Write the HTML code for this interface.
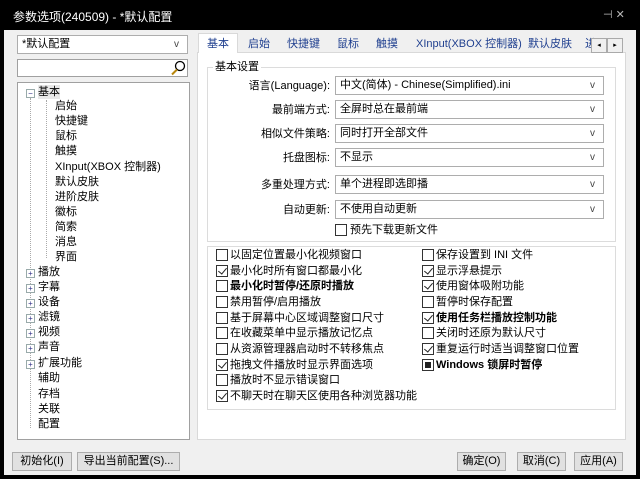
<!DOCTYPE html>
<html><head><meta charset="utf-8"><style>
*{box-sizing:border-box;margin:0;padding:0}
body{width:640px;height:479px;background:#000;font-family:"Liberation Sans","Noto Sans CJK SC",sans-serif;font-size:11px;color:#000;position:relative;overflow:hidden}
.a{position:absolute;white-space:nowrap}
#win{position:absolute;left:4px;top:30px;width:632px;height:445px;background:#f0f0f0}
.box{position:absolute;background:#fff;border:1px solid #a0a0a0}
.cb{position:absolute;background:#fff;border:1px solid #adadad;height:19px;line-height:17px;padding-left:4px}
.cb:after{content:"v";position:absolute;right:8px;top:0;font-size:10px;color:#444}
.btn{position:absolute;border:1px solid #adadad;background:#e1e1e1;height:19px;line-height:17px;text-align:center}
.tab{position:absolute;top:36px;color:#1f3f8f;line-height:16px}
.ck{position:absolute;width:12px;height:12px;border:1px solid #333;background:#fff}
.ck.on:after{content:"";position:absolute;left:3px;top:0px;width:4px;height:7px;border:solid #222;border-width:0 1.5px 1.5px 0;transform:rotate(40deg)}
.lbl{position:absolute;line-height:14px;white-space:nowrap}
.t{position:absolute;line-height:14px;white-space:nowrap}
.pl{position:absolute;width:9px;height:9px;border:1px solid #9aa;background:#fff;font-size:8px;line-height:7px;text-align:center;color:#338}
</style></head><body>
<div class="a" style="left:13px;top:8px;color:#fff;font-size:12px">参数选项(240509) - *默认配置</div>
<div class="a" style="left:603px;top:8px;color:#bbb;font-size:11px">⊣ ✕</div>
<div id="win"></div>
<div class="cb" style="left:17px;top:35px;width:171px">*默认配置</div>
<div class="box" style="left:17px;top:59px;width:171px;height:18px"></div>
<svg class="a" style="left:170px;top:60px" width="17" height="16"><circle cx="10" cy="6" r="4.5" fill="none" stroke="#000" stroke-width="1.3"/><line x1="7" y1="9.5" x2="2" y2="14.5" stroke="#b8860b" stroke-width="2"/></svg>
<div class="box" style="left:17px;top:82px;width:173px;height:358px"></div>
<div class="a" style="left:30px;top:98px;height:330px;border-left:1px dotted #aaa"></div>
<div class="a" style="left:46px;top:100px;height:158px;border-left:1px dotted #aaa"></div>
<div class="pl" style="left:26px;top:89px">−</div>
<div class="t" style="left:38px;top:85px;background:#e8e8e8">基本</div>
<div class="t" style="left:55px;top:99px">启始</div>
<div class="t" style="left:55px;top:114px">快捷键</div>
<div class="t" style="left:55px;top:129px">鼠标</div>
<div class="t" style="left:55px;top:144px">触摸</div>
<div class="t" style="left:55px;top:160px">XInput(XBOX 控制器)</div>
<div class="t" style="left:55px;top:175px">默认皮肤</div>
<div class="t" style="left:55px;top:190px">进阶皮肤</div>
<div class="t" style="left:55px;top:205px">徽标</div>
<div class="t" style="left:55px;top:220px">简索</div>
<div class="t" style="left:55px;top:235px">消息</div>
<div class="t" style="left:55px;top:250px">界面</div>
<div class="pl" style="left:26px;top:269px">+</div><div class="t" style="left:38px;top:265px">播放</div>
<div class="pl" style="left:26px;top:284px">+</div><div class="t" style="left:38px;top:280px">字幕</div>
<div class="pl" style="left:26px;top:299px">+</div><div class="t" style="left:38px;top:295px">设备</div>
<div class="pl" style="left:26px;top:314px">+</div><div class="t" style="left:38px;top:310px">滤镜</div>
<div class="pl" style="left:26px;top:329px">+</div><div class="t" style="left:38px;top:325px">视频</div>
<div class="pl" style="left:26px;top:344px">+</div><div class="t" style="left:38px;top:340px">声音</div>
<div class="pl" style="left:26px;top:360px">+</div><div class="t" style="left:38px;top:356px">扩展功能</div>
<div class="t" style="left:38px;top:371px">辅助</div>
<div class="t" style="left:38px;top:387px">存档</div>
<div class="t" style="left:38px;top:402px">关联</div>
<div class="t" style="left:38px;top:417px">配置</div>
<div class="btn" style="left:12px;top:452px;width:60px">初始化(I)</div>
<div class="btn" style="left:77px;top:452px;width:103px">导出当前配置(S)...</div>
<div class="box" style="left:197px;top:52px;width:429px;height:388px;border-color:#d9d9d9"></div>
<div class="a" style="left:198px;top:33px;width:40px;height:20px;background:#fff;border:1px solid #d9d9d9;border-bottom:none"></div>
<div class="tab" style="left:207px">基本</div>
<div class="tab" style="left:248px">启始</div>
<div class="tab" style="left:287px">快捷键</div>
<div class="tab" style="left:337px">鼠标</div>
<div class="tab" style="left:376px">触摸</div>
<div class="tab" style="left:416px">XInput(XBOX 控制器)</div>
<div class="tab" style="left:528px">默认皮肤</div>
<div class="tab" style="left:585px">进</div>
<div class="a" style="left:591px;top:38px;width:16px;height:15px;background:#f0f0f0;border:1px solid #aaa;font-size:7px;line-height:13px;text-align:center">◂</div>
<div class="a" style="left:607px;top:38px;width:16px;height:15px;background:#f0f0f0;border:1px solid #aaa;font-size:7px;line-height:13px;text-align:center">▸</div>
<div class="a" style="left:207px;top:67px;width:409px;height:175px;border:1px solid #dcdcdc"></div>
<div class="a" style="left:213px;top:60px;background:#fff;padding:0 2px;line-height:14px">基本设置</div>
<div class="lbl" style="right:310px;top:79px">语言(Language):</div>
<div class="cb" style="left:335px;top:76px;width:269px">中文(简体) - Chinese(Simplified).ini</div>
<div class="lbl" style="right:310px;top:103px">最前端方式:</div>
<div class="cb" style="left:335px;top:100px;width:269px">全屏时总在最前端</div>
<div class="lbl" style="right:310px;top:127px">相似文件策略:</div>
<div class="cb" style="left:335px;top:124px;width:269px">同时打开全部文件</div>
<div class="lbl" style="right:310px;top:151px">托盘图标:</div>
<div class="cb" style="left:335px;top:148px;width:269px">不显示</div>
<div class="lbl" style="right:310px;top:178px">多重处理方式:</div>
<div class="cb" style="left:335px;top:175px;width:269px">单个进程即选即播</div>
<div class="lbl" style="right:310px;top:203px">自动更新:</div>
<div class="cb" style="left:335px;top:200px;width:269px">不使用自动更新</div>
<div class="ck" style="left:335px;top:224px"></div><div class="lbl" style="left:350px;top:223px">预先下载更新文件</div>
<div class="a" style="left:207px;top:246px;width:409px;height:164px;border:1px solid #dcdcdc"></div>
<div class="ck" style="left:216px;top:249px"></div><div class="lbl" style="left:230px;top:248px">以固定位置最小化视频窗口</div>
<div class="ck on" style="left:216px;top:265px"></div><div class="lbl" style="left:230px;top:264px">最小化时所有窗口都最小化</div>
<div class="ck" style="left:216px;top:280px"></div><div class="lbl" style="left:230px;top:279px;font-weight:bold">最小化时暂停/还原时播放</div>
<div class="ck" style="left:216px;top:296px"></div><div class="lbl" style="left:230px;top:295px">禁用暂停/启用播放</div>
<div class="ck" style="left:216px;top:312px"></div><div class="lbl" style="left:230px;top:311px">基于屏幕中心区域调整窗口尺寸</div>
<div class="ck" style="left:216px;top:327px"></div><div class="lbl" style="left:230px;top:326px">在收藏菜单中显示播放记忆点</div>
<div class="ck" style="left:216px;top:343px"></div><div class="lbl" style="left:230px;top:342px">从资源管理器启动时不转移焦点</div>
<div class="ck on" style="left:216px;top:359px"></div><div class="lbl" style="left:230px;top:358px">拖拽文件播放时显示界面选项</div>
<div class="ck" style="left:216px;top:374px"></div><div class="lbl" style="left:230px;top:373px">播放时不显示错误窗口</div>
<div class="ck on" style="left:216px;top:390px"></div><div class="lbl" style="left:230px;top:389px">不聊天时在聊天区使用各种浏览器功能</div>
<div class="ck" style="left:422px;top:249px"></div><div class="lbl" style="left:436px;top:248px">保存设置到 INI 文件</div>
<div class="ck on" style="left:422px;top:265px"></div><div class="lbl" style="left:436px;top:264px">显示浮悬提示</div>
<div class="ck on" style="left:422px;top:280px"></div><div class="lbl" style="left:436px;top:279px">使用窗体吸附功能</div>
<div class="ck" style="left:422px;top:296px"></div><div class="lbl" style="left:436px;top:295px">暂停时保存配置</div>
<div class="ck on" style="left:422px;top:312px"></div><div class="lbl" style="left:436px;top:311px;font-weight:bold">使用任务栏播放控制功能</div>
<div class="ck" style="left:422px;top:327px"></div><div class="lbl" style="left:436px;top:326px">关闭时还原为默认尺寸</div>
<div class="ck on" style="left:422px;top:343px"></div><div class="lbl" style="left:436px;top:342px">重复运行时适当调整窗口位置</div>
<div class="ck" style="left:422px;top:359px"><div style="position:absolute;left:2px;top:2px;width:6px;height:6px;background:#222"></div></div><div class="lbl" style="left:436px;top:358px;font-weight:bold">Windows 锁屏时暂停</div>
<div class="btn" style="left:457px;top:452px;width:49px">确定(O)</div>
<div class="btn" style="left:517px;top:452px;width:49px">取消(C)</div>
<div class="btn" style="left:574px;top:452px;width:49px">应用(A)</div>
</body></html>
